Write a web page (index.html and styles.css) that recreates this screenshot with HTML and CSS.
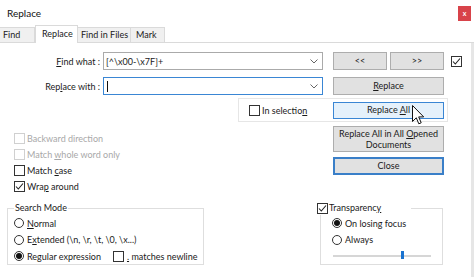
FILE: index.html
```html
<!DOCTYPE html>
<html>
<head>
<meta charset="utf-8">
<link rel="stylesheet" href="styles.css">
</head>
<body>
<div class="window">
  <div class="titlebar">
    <span class="title">Replace</span>
    <span class="close">x</span>
  </div>
  <div class="tabs">
    <div class="tab t-find">Find</div>
    <div class="tab active t-replace">Replace</div>
    <div class="tab t-files">Find in Files</div>
    <div class="tab t-mark">Mark</div>
  </div>
  <div class="panel">
    <div class="main">
      <div class="row row1">
        <label class="label"><u>F</u>ind what :</label>
        <div class="combo">
          <span class="combo-text">[^\x00-\x7F]+</span>
          <svg class="chev" width="8" height="5" viewBox="0 0 8 5"><path d="M0.5 0.5 L4 4 L7.5 0.5" fill="none" stroke="#666" stroke-width="1"/></svg>
        </div>
        <div class="dirbtns">
          <button class="btn small">&lt;&lt;</button>
          <button class="btn small">&gt;&gt;</button>
        </div>
        <span class="cb checked top-cb"><svg width="11" height="11" viewBox="0 0 11 11"><path d="M2 5.5 L4.3 8 L9 2.5" fill="none" stroke="#222" stroke-width="1.1"/></svg></span>
      </div>
      <div class="row row2">
        <label class="label">Rep<u>l</u>ace with :</label>
        <div class="combo focus">
          <span class="caret"></span>
          <svg class="chev" width="8" height="5" viewBox="0 0 8 5"><path d="M0.5 0.5 L4 4 L7.5 0.5" fill="none" stroke="#666" stroke-width="1"/></svg>
        </div>
        <button class="btn wide"><u>R</u>eplace</button>
      </div>
      <div class="selbox">
        <span class="check"><span class="cb"></span><span>In selectio<u>n</u></span></span>
        <button class="btn wide hover">Replace <u>A</u>ll</button>
      </div>
      <div class="middle">
        <div class="options">
          <div class="check disabled"><span class="cb"></span><span>Backward direction</span></div>
          <div class="check disabled"><span class="cb"></span><span>Match <u>w</u>hole word only</span></div>
          <div class="check"><span class="cb"></span><span>Match <u>c</u>ase</span></div>
          <div class="check"><span class="cb checked"><svg width="11" height="11" viewBox="0 0 11 11"><path d="M2 5.5 L4.3 8 L9 2.5" fill="none" stroke="#222" stroke-width="1.1"/></svg></span><span>Wra<u>p</u> around</span></div>
        </div>
        <div class="actions">
          <button class="btn wide tall">Replace All in All <u>O</u>pened<br>Documents</button>
          <button class="btn wide default">Close</button>
        </div>
      </div>
      <div class="bottom">
        <fieldset class="group mode">
          <legend>Search Mode</legend>
          <div class="radio"><span class="rb"></span><span><u>N</u>ormal</span></div>
          <div class="radio"><span class="rb"></span><span>E<u>x</u>tended (\n, \r, \t, \0, \x...)</span></div>
          <div class="radio"><span class="rb on"></span><span>Re<u>g</u>ular expression</span><span class="cb nl"></span><span><u>.</u> matches newline</span></div>
        </fieldset>
        <fieldset class="group trans">
          <legend><span class="cb checked"><svg width="11" height="11" viewBox="0 0 11 11"><path d="M2 5.5 L4.3 8 L9 2.5" fill="none" stroke="#222" stroke-width="1.1"/></svg></span><span>Transparenc<u>y</u></span></legend>
          <div class="radio"><span class="rb on"></span><span>On losing focus</span></div>
          <div class="radio"><span class="rb"></span><span>Always</span></div>
          <div class="slider"><span class="thumb"></span></div>
        </fieldset>
      </div>
    </div>
    <div class="strip"></div>
  </div>
  <svg class="cursor" width="13" height="21" viewBox="0 0 13 21"><path d="M0.5 0.5 L0.5 16.5 L4.3 12.8 L6.8 18.8 L9.2 17.8 L6.7 11.9 L11.7 11.9 Z" fill="#fff" stroke="#111" stroke-width="1"/></svg>
</div>
</body>
</html>
```
FILE: styles.css
```css
* { box-sizing: border-box; }
html, body { margin: 0; padding: 0; background: #fff; }
body {
  font-family: Lato, "Noto Sans", sans-serif;
  font-size: 9px;
  color: #1a1a1a;
  width: 474px;
  height: 277px;
  overflow: hidden;
  white-space: nowrap;
}
u { text-decoration: underline; text-underline-offset: 1px; }
.window { position: relative; width: 474px; height: 277px; display: flex; flex-direction: column; }
.titlebar { height: 25px; display: flex; align-items: center; justify-content: space-between; padding-left: 7px; padding-right: 3px; }
.title { font-size: 10px; color: #111; }
.close { width: 13px; height: 15px; background: #d8434a; color: #fff; font-size: 7px; line-height: 15px; text-align: center; font-weight: bold; margin-top: 2px; }
.tabs { height: 18px; display: flex; align-items: flex-end; border-bottom: 1px solid #dadada; }
.tab { height: 15px; line-height: 14px; background: #f0f0f0; border: 1px solid #dadada; border-bottom: none; border-left: none; color: #1a1a1a; }
.tab.active { background: #fff; margin-bottom: -1px; height: 18px; border-left: 1px solid #dadada; line-height: 15px; }
.t-find { width: 35px; padding-left: 3px; }
.t-replace { width: 43px; padding-left: 6px; }
.t-files { width: 53px; padding-left: 3px; }
.t-mark { width: 34px; padding-left: 5px; }
.panel { flex: 1; display: flex; }
.main { width: 471px; }
.strip { width: 3px; background: #e6e6e6; }
.row { display: flex; align-items: center; height: 18px; }
.row1 { margin-top: 9px; }
.row2 { margin-top: 7px; }
.label { width: 103px; text-align: right; padding-right: 3px; }
.combo { width: 220px; height: 18px; border: 1px solid #aaa; display: flex; align-items: center; padding-left: 2px; position: relative; }
.combo.focus { border-color: #3a86d4; }
.combo-text { flex: 1; }
.chev { position: absolute; right: 4px; top: 6px; }
.caret { width: 1px; height: 11px; background: #111; margin-left: 1px; }
.btn { font: inherit; color: #1a1a1a; background: #e1e1e1; border: 1px solid #adadad; padding: 0; margin: 0; height: 18px; line-height: 1.2; }
.dirbtns { display: flex; gap: 3px; margin-left: 10px; }
.btn.small { width: 54px; }
.btn.wide { width: 111px; }
.row2 .btn { margin-left: 10px; }
.top-cb { margin-left: 7px; }
.cb { width: 11px; height: 11px; border: 1px solid #333; background: #fff; display: inline-flex; flex-shrink: 0; }
.cb svg { margin: -1px; }
.selbox { margin-top: 3px; margin-left: 238px; width: 210px; height: 24px; border: 1px solid #e6e6e6; display: flex; align-items: center; padding-left: 10px; padding-right: 3px; }
.selbox .btn { margin-left: auto; height: 17px; }
.btn.hover { background: #e5f1fb; border-color: #3a86d4; }
.check { display: flex; align-items: center; gap: 2px; height: 16px; }
.check.disabled { color: #a8a8a8; }
.check.disabled .cb { border-color: #d0d0d0; }
.middle { display: flex; margin-top: 4px; }
.options { margin-left: 14px; width: 319px; padding-top: 4px; }
.actions { display: flex; flex-direction: column; gap: 5px; }
.btn.tall { height: 26px; line-height: 11px; }
.btn.default { border: 2px solid #3a7fc8; }
.bottom { display: flex; margin-top: 7px; }
.group { margin: 0; padding: 0 0 0 6px; border: 1px solid #dedede; height: 64px; }
.group legend { padding: 0 1px; line-height: 14px; display: flex; align-items: center; }
.mode { margin-left: 7px; width: 197px; }
.trans { margin-left: 116px; width: 123px; padding-left: 11px; }
.trans legend { margin-left: -16px; gap: 1px; padding-right: 30px; }
.radio { display: flex; align-items: center; gap: 3px; height: 16.5px; }
.rb { width: 10px; height: 10px; border: 1px solid #333; border-radius: 50%; background: #fff; display: inline-flex; align-items: center; justify-content: center; flex-shrink: 0; }
.rb.on::after { content: ""; width: 6px; height: 6px; border-radius: 50%; background: #111; }
.nl { margin-left: 9px; margin-right: 0; }
.slider { height: 10px; margin-top: 3px; margin-left: 1px; width: 98px; position: relative; }
.slider::before { content: ""; position: absolute; left: 0; right: 0; top: 4px; height: 2px; background: #d6d6d6; }
.thumb { position: absolute; left: 68px; top: 0; width: 3px; height: 8px; background: #1a73d0; }
.cursor { position: absolute; left: 412px; top: 105px; }
```
